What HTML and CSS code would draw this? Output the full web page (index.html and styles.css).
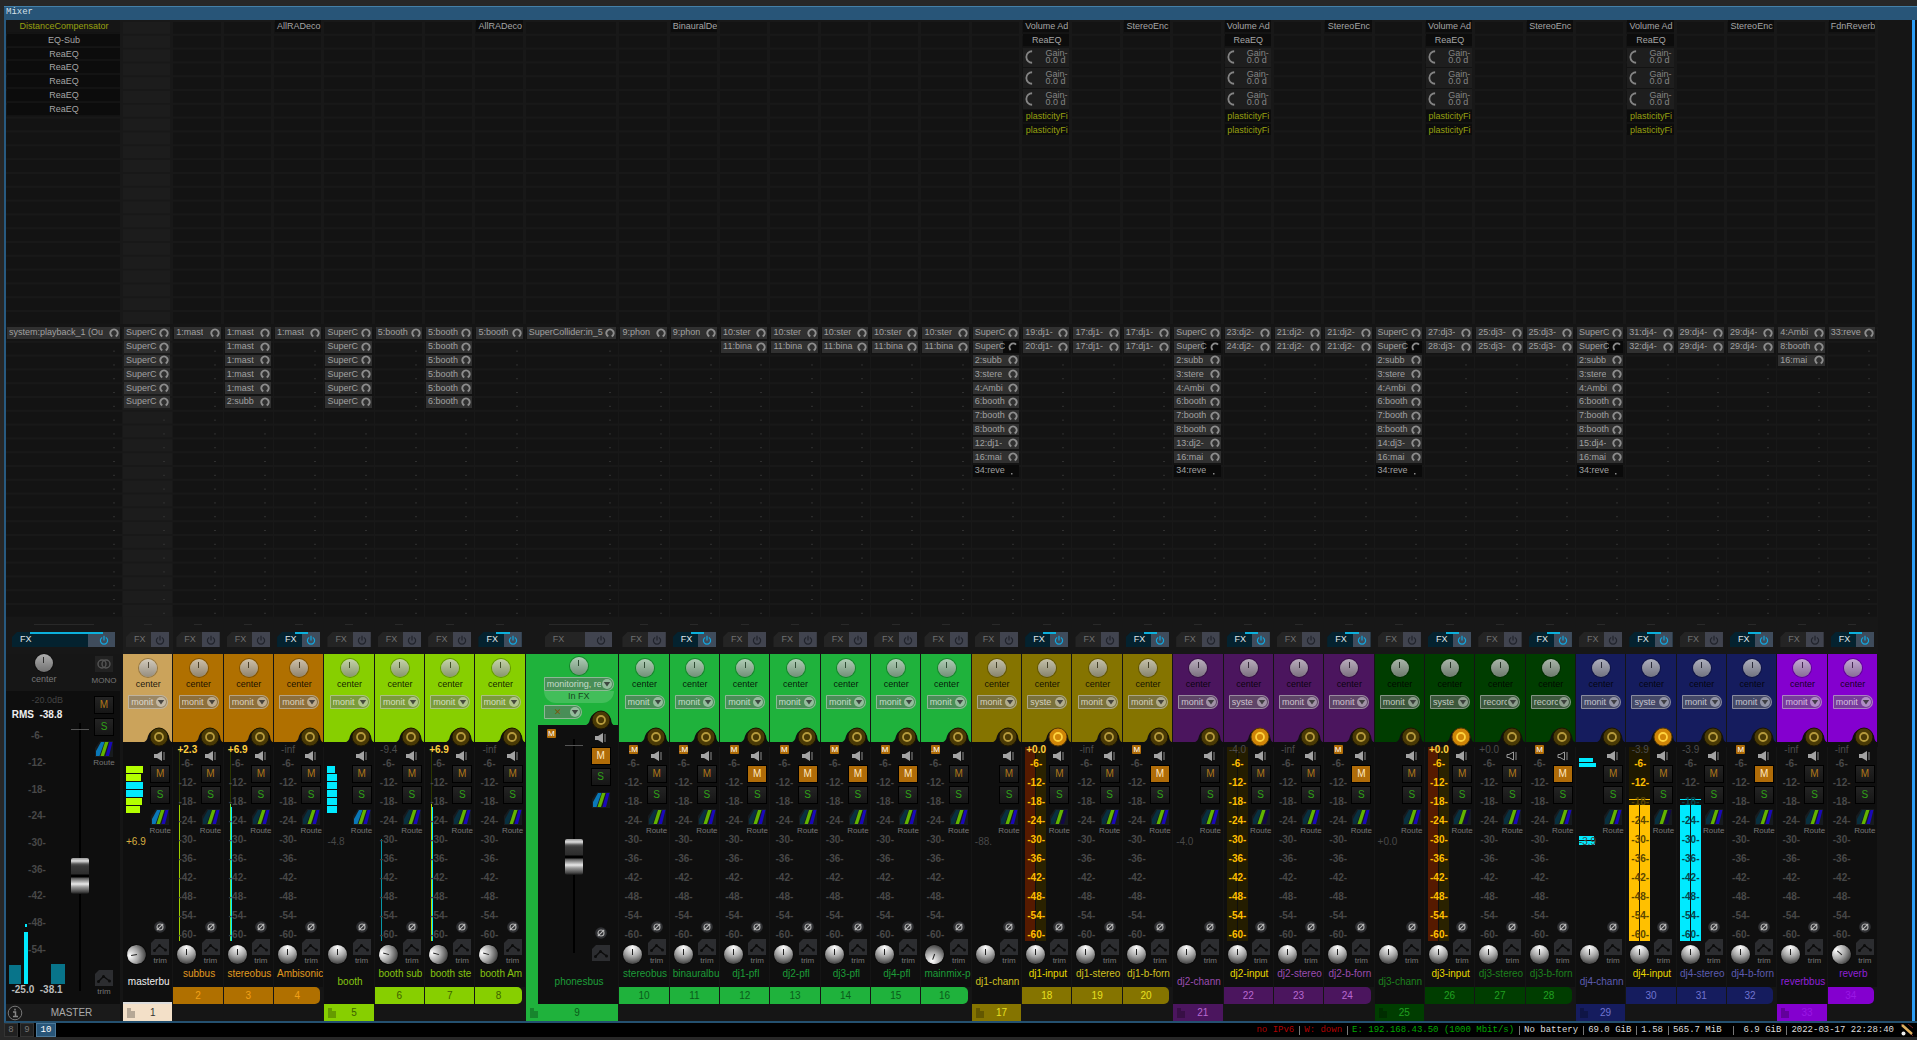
FILE: index.html
```html
<!DOCTYPE html>
<html lang="en">
<head>
<meta charset="utf-8">
<meta name="viewport" content="width=device-width, initial-scale=1">
<title>Mixer</title>
<link rel="stylesheet" href="styles.css">
</head>
<body>
<svg class="sprites" aria-hidden="true">
  <symbol id="power" viewBox="0 0 10 10"><path d="M3.2 2.4A3.6 3.6 0 1 0 6.8 2.4M5 .8V5.4" fill="none" stroke="currentColor" stroke-width="1.2"/></symbol>
  <symbol id="ring" viewBox="0 0 10 10"><path d="M3.3 8.4A3.7 3.7 0 1 1 6.7 8.4" fill="none" stroke="#8d8d8d" stroke-width="1.9"/></symbol>
  <symbol id="ring-low" viewBox="0 0 10 10"><path d="M2.600 8A3.7 3.7 0 0 1 8 2.6" fill="none" stroke="#8d8d8d" stroke-width="1.9"/></symbol>
  <symbol id="dot" viewBox="0 0 10 10"><rect x="3" y="7" width="1.5" height="1.5" fill="#888"/></symbol>
  <symbol id="gain" viewBox="0 0 10 16"><path d="M9 1.6A6.4 6.4 0 0 0 9 14.4" fill="none" stroke="#858585" stroke-width="2"/></symbol>
  <symbol id="speaker" viewBox="0 0 12 10"><path d="M0 3H3L8 0V10L3 7H0Z" fill="#a3a3a3"/><path d="M10 1V9" stroke="#777" stroke-width="1.2"/></symbol>
  <symbol id="speaker-off" viewBox="0 0 12 10"><path d="M1 3.5H3L7.5 1V9L3 6.5H1Z" fill="none" stroke="#9a9a9a"/><path d="M10 1V9" stroke="#777" stroke-width="1.2"/></symbol>
  <symbol id="route" viewBox="0 0 18 16"><path d="M5 0H18V16H0V7Z" fill="#171b1e"/><path d="M6 1H9.5L4.5 15H1V10Z" style="fill:var(--send)"/><path d="M10 1H13.500L9 15H5.500Z" fill="#62b400"/><path d="M14.500 1H17.500L14 15H10.500Z" style="fill:var(--recv)"/></symbol>
  <symbol id="phase" viewBox="0 0 12 12"><circle cx="6" cy="6" r="5.800" fill="#2f3033"/><circle cx="6" cy="6" r="3" fill="none" stroke="#aaa" stroke-width="1.200"/><path d="M2.800 9.200L9.200 2.800" stroke="#bbb" stroke-width="1.200"/></symbol>
  <symbol id="envelope" viewBox="0 0 18 16"><path d="M4 0H18V16H0V4Z" fill="#2c2d30"/><path d="M3.500 11.500L8.500 6.500L14.500 11" fill="none" stroke="#0c0c0c" stroke-width="1.400"/><circle cx="3.500" cy="11.500" r="1.500" fill="#0c0c0c"/><circle cx="8.500" cy="6.500" r="1.500" fill="#0c0c0c"/><circle cx="14.500" cy="11" r="1.500" fill="#0c0c0c"/></symbol>
  <symbol id="hill" viewBox="0 0 31 22"><path d="M0 17.500Q5 17 6 11A11 11 0 0 1 27 11Q27.500 17 31 17.500V22H0Z" fill="#0f0f0f"/></symbol>
  <symbol id="record" viewBox="0 0 20 20"><circle cx="10" cy="10" r="9" style="fill:var(--disc);stroke:var(--edge)"/><circle cx="10" cy="10" r="4" fill="none" style="stroke:var(--hole)" stroke-width="1.800"/></symbol>
  <symbol id="arrow" viewBox="0 0 12 12"><circle cx="6" cy="6" r="5" fill="#fff" fill-opacity=".42"/><path d="M2.800 4H9.200L6 8.600Z" fill="#222" fill-opacity=".75"/></symbol>
  <symbol id="folder" viewBox="0 0 8 10"><path d="M0 0H4V3H8V10H0Z" fill="#000" fill-opacity=".25"/></symbol>
  <symbol id="mono" viewBox="0 0 18 16"><circle cx="7" cy="8" r="4" fill="none" stroke="#555" stroke-width="1.400"/><circle cx="11" cy="8" r="4" fill="none" stroke="#555" stroke-width="1.400"/></symbol>
  <symbol id="info" viewBox="0 0 16 16"><circle cx="8" cy="8" r="6.800" fill="none" stroke="#777"/><path d="M6 7H8.500V11.500M6 11.500H11M8 3.800V5.400" fill="none" stroke="#888" stroke-width="1.500"/></symbol>
  <symbol id="brush" viewBox="0 0 12 12"><path d="M0 0L12 12M7 0L12 4" stroke="#702020" stroke-width="1"/><path d="M1 1L11 10" stroke="#e0b060" stroke-width="2.500"/><circle cx="2.500" cy="9.500" r="2" fill="#eee"/></symbol>
</svg>
<main class="window">
  <header class="titlebar">Mixer</header>
  <div class="mixer">
    <section class="strip master" id="master" aria-label="Master"></section>
    <div class="tracks" id="tracks"></div>
  </div>
</main>
<footer class="statusbar">
  <nav class="workspaces">
    <button>8</button><button>9</button><button class="current">10</button>
  </nav>
  <div class="status">
    <span class="bad">no IPv6</span><span class="bad">W: down</span><span class="good">E: 192.168.43.50 (1000 Mbit/s)</span><span>No battery</span><span>69.0 GiB</span><span>1.58</span><span>565.7 MiB</span><span class="wide">6.9 GiB</span><span>2022-03-17 22:28:40</span>
    <svg class="tray"><use href="#brush"/></svg>
  </div>
</footer>
<script src="mixer.js"></script>
</body>
</html>
```

FILE: styles.css
```css
* { box-sizing: border-box; }

body {
  margin: 0;
  min-height: 100vh;
  display: flex;
  flex-direction: column;
  padding: 6px 0 3px 4px;
  background: #272727;
  color: #9a9a9a;
  font: 9px/12px "Liberation Sans", Arial, sans-serif;
}

button, select, input { margin: 0; padding: 0; border: 0; font: inherit; color: inherit; background: none; }
svg { display: block; flex: none; }
.sprites { position: absolute; width: 0; height: 0; }

.window { flex: 1; display: flex; flex-direction: column; background: #151515; border-left: 2px solid #285a80; border-bottom: 2px solid #24506f; }
.titlebar { height: 14px; margin-left: -2px; padding-left: 2px; background: #285578; border-top: 1px solid #4480a8; color: #d5e0e8; font: 9px/10px "Liberation Mono", monospace; }
.mixer { flex: 1; display: flex; margin-right: 2px; padding-right: 34px; border-right: 3px solid #2e9ef4; }
.tracks { flex: 1; display: flex; min-width: 0; }

/* strips */
.strip { --send: #083040; --recv: #1a08b8; --disc: #4a3a05; --edge: #1c1602; --hole: #b59a3c; display: flex; flex-direction: column; flex: 50 1 0; min-width: 0; }
.strip.wide { flex-grow: 93; }
.strip.armed { --recv: #120848; --disc: #cf8508; --edge: #5a3c04; --hole: #ffd23c; }
.both { --send: #0a78b8; }
.master { flex: none; width: 117px; }
.strip.selected .slots, .strip.selected .fxbar { background-color: #1c1c1c; }

.slots { display: grid; min-height: 0; flex-basis: 0; overflow: hidden; border-right: 3px solid #181818; background-color: #131313; background-image: linear-gradient(#181818 2px, transparent 2px); }
.inserts { flex-grow: 22; grid-template-rows: repeat(44, minmax(0, 1fr)); background-size: 100% calc(100% / 22); }
.sends { flex-grow: 21; margin-top: 3px; grid-template-rows: repeat(21, minmax(0, 1fr)); border-right-width: 1px; padding-left: 1px; background-size: 100% calc(100% / 21); background-image: radial-gradient(circle at calc(100% - 8px) 75%, #303030 1px, transparent 1px), linear-gradient(#181818 2px, transparent 2px); }

.insert { grid-row: span 2; margin: 0 0 2px 1px; padding: 0 1px 0 2px; display: flex; justify-content: safe center; overflow: hidden; white-space: nowrap; background: #0c0c0c; color: #a5a5a5; line-height: 12px; }
.insert.offline { color: #98a010; }
.master .insert.offline { background: #151515; }
.gain { grid-row: span 3; margin: 0 0 1px 1px; display: flex; align-items: center; justify-content: space-between; background: #1e1e1e; color: #858585; padding: 0 2px 0 1px; line-height: 7px; }
.gain svg { width: 9px; height: 16px; }
.gain span { white-space: nowrap; text-align: left; }

.send-slot { margin: 0 2px 2px 0; display: flex; align-items: center; justify-content: space-between; min-width: 0; background: #303030; color: #a0a0a0; }
.send-slot span { margin-left: 1px; padding-left: 1px; overflow: hidden; white-space: nowrap; line-height: 11px; min-width: 0; }
.send-slot svg { width: 10px; height: 10px; margin-right: 1px; }
.send-slot.quiet { background: linear-gradient(90deg, #303030 30px, #090909 30px); }
.send-slot.muted { background: #0a0a0a; }

.fxbar { height: 37px; padding: 7px 4px 7px 3px; display: flex; flex-direction: column; gap: 7px; align-items: stretch; background: #171717; }
.fxbar i { height: 1px; width: 8px; align-self: center; background: #292929; }
.wide .fxbar { padding-left: 19px; padding-right: 7px; }
.master .fxbar { padding-left: 6px; padding-right: 8px; }
.master .fxbar i, .wide .fxbar i { width: 60px; }
.fx { position: relative; display: flex; height: 15px; clip-path: polygon(5px 0, 100% 0, 100% 100%, 0 100%, 0 5px); background: #242424; color: #707070; line-height: 15px; }
.fx b { flex: 1; font-weight: normal; padding-left: 8px; text-align: left; }
.fx em { width: 18px; display: flex; align-items: center; justify-content: center; background: #41444f; color: #20232b; }
.fx svg { width: 10px; height: 10px; }
.fx.on { background: #04222f; color: #e0e8ea; }
.fx.on::before { content: ""; position: absolute; top: 0; left: 18px; right: 12px; height: 2px; background: #0cb0dc; }
.fx.on em { color: #12a8e0; background: #3f4c5c; }
.wide .fx em, .master .fx em { width: 27px; padding-left: 5px; }

/* coloured panel */
.panel { position: relative; height: 88px; margin-right: 1px; padding: 5px 0 0 1px; display: flex; flex-direction: column; align-items: center; background: var(--color); }
.panel .label { color: #000d; line-height: 14px; }
.knob { appearance: none; flex: none; width: 18px; height: 18px; border-radius: 9px; background: linear-gradient(#333, #333) 50% 3px / 1px 6px no-repeat, linear-gradient(#d5d5d5, #888); opacity: .8; box-shadow: 0 0 0 1px #0005; }
.knob::-webkit-slider-thumb { appearance: none; width: 0; height: 0; }
.level.knob { width: 19px; height: 19px; border-radius: 10px; opacity: 1; background: linear-gradient(#222, #222) 50% 4px / 1px 6px no-repeat, radial-gradient(circle at 50% 15%, #fff, #aaa 45%, #444 85%); }

.picker { position: relative; width: 40px; height: 14px; margin-top: 4px; }
.picker select { appearance: none; display: block; width: 100%; height: 14px; padding: 0 12px 0 2px; background: #6f6f6f88; border: 1px solid #ffffff60; border-radius: 1px 7px 7px 1px; color: #ffffffb0; font-size: 9px; line-height: 11px; }
.picker svg { position: absolute; right: 1px; top: 1px; width: 12px; height: 12px; pointer-events: none; }
.arm { position: absolute; right: -1px; bottom: -5px; width: 31px; height: 22px; }
.arm svg { width: 31px; height: 22px; }
.arm .rec { position: absolute; left: 7px; top: 2px; width: 20px; height: 20px; }

/* meter and buttons */
.body { height: 225px; margin-right: 1px; display: grid; grid-template-columns: 25px 1fr; background: #0f0f0f; }
.left { position: relative; display: flex; flex-direction: column; padding-left: 3px; min-width: 0; }
.peak { position: relative; height: 13px; line-height: 16px; font-size: 10px; color: #4c4c4c; text-align: center; white-space: nowrap; }
.peak.hot { color: #ffd040; font-weight: bold; }
.scale { position: relative; height: 189px; display: grid; grid-template-rows: repeat(10, 1fr); align-items: center; text-align: center; font-size: 10px; font-weight: bold; color: #484848; }
.input .scale { color: #ffbf00; }
.lit .scale span:nth-child(n+3) { color: #06454b; }
.input.lit .scale span:nth-child(n+3) { color: #5a4600; }
.meter { position: absolute; left: 3px; top: 5px; width: 21px; height: 194px; }
.meter i { position: absolute; bottom: 0; }
.badge { align-self: center; margin-top: 3px; width: 9px; height: 9px; font-size: 8px; line-height: 9px; text-align: center; color: #fff; background: #b06c08; border-radius: 1px; }
.badge + .scale { margin-top: 1px; }
.left .level { margin: 1px 0 0 1px; }
.blocks { height: 86px; padding-top: 24px; display: flex; flex-direction: column; gap: 1px; }
.blocks i { height: 7px; flex: none; }
.blocks.split { padding-top: 16px; }
.blocks.split i { height: 4px; }
.blocks.split i:nth-child(3) { margin-top: 68px; }
.volume { height: 116px; padding-top: 8px; font-size: 10px; color: #484848; white-space: nowrap; width: 21px; }
.volume.hot { color: #d8b040; }

.right { display: flex; flex-direction: column; align-items: center; padding-top: 9px; }
.right svg { width: 18px; height: 16px; }
.right .spk { width: 12px; height: 10px; }
.ms { width: 18px; height: 16px; margin-top: 5px; background: linear-gradient(#242424, #161616); font-size: 10px; line-height: 16px; text-align: center; box-shadow: 0 0 0 1px #000; }
.mute { color: #b07818; }
.solo { color: #30a018; }
.mute.on { background: #b06c08; color: #ffe8c0; }
.route { margin-top: 6px; }
.cap { font-size: 8px; color: #777; line-height: 12px; }
.right .ph { width: 12px; height: 12px; margin: auto 0 6px; }

/* names and numbers */
.name { height: 20px; padding: 0 1px 0 3px; display: flex; justify-content: safe center; overflow: hidden; white-space: nowrap; font-size: 10px; line-height: 14px; color: var(--name); background: #0f0f0f; margin-right: 1px; }
.folder .name { height: 37px; padding-top: 8px; }
.number { position: relative; height: 17px; margin: 0 1px 17px 0; font-size: 10px; line-height: 17px; text-align: center; background: var(--color); color: var(--num); }
.last .number { margin-right: 4px; border-radius: 0 5px 5px 0; }
.folder .number { margin-bottom: 0; padding-left: 10px; }
.folder .number svg { position: absolute; left: 4px; top: 4px; width: 8px; height: 10px; }
.selected .number { background: #f3e0c8; box-shadow: 0 -2px #ddd; }

/* wide folder strip */
.wide .panel { height: 71px; padding: 3px 5px 0 18px; align-items: flex-start; }
.wide .panel .knob { margin-left: 26px; }
.wide .picker { width: 70px; margin-top: 2px; }
.wide .infx { width: 70px; height: 12px; line-height: 10px; text-align: center; background: #ffffff28; border-radius: 0 0 30px 30px; color: #000a; }
.wide .picker.small { width: 38px; margin-top: 2px; }
.wide .picker.small select { padding-left: 9px; color: #7a5a10; }
.wide .arm { right: 3px; }
.wide .body { height: 242px; border-left: 12px solid var(--color); grid-template-columns: 51px 1fr; }
.wide .left { padding: 4px 0 0; flex-direction: row; }
.wide .badge { align-self: flex-start; margin: 0 0 0 9px; }
.wide .fader { margin-left: 9px; margin-top: 10px; height: 214px; }
.wide .right { padding: 8px 6px 6px 0; }
.wide .name { border-left: 12px solid var(--color); }
.wide .route { margin-top: 7px; }

.fader { appearance: none; writing-mode: vertical-lr; direction: rtl; width: 18px; background: linear-gradient(#555, #555) 50% 6px / 18px 1px no-repeat, linear-gradient(#000, #000) 50% 0 / 2px 100% no-repeat; }
.fader::-webkit-slider-thumb { appearance: none; width: 18px; height: 36px; background: linear-gradient(#999 0, #ddd 3px, #555 6px, #3a3a3a 8px, #2c2c2c 16px, #000 17px, #000 19px, #555 20px, #e8e8e8 26px, #999 29px, #444 34px, #111 36px); border-radius: 2px; }

/* master */
.mhead { height: 37px; display: grid; grid-template-columns: 76px 1fr; margin-right: 3px; background: #161616; justify-items: center; align-items: start; color: #777; }
.mhead > * { display: flex; flex-direction: column; align-items: center; }
.mhead > :last-child { margin-left: 6px; }
.mhead .label { line-height: 14px; }
.mhead svg { width: 18px; height: 16px; background: #222; margin-top: 2px; }
.mhead .cap { line-height: 17px; }
.mbody { height: 313px; margin-right: 3px; display: grid; grid-template-columns: 62px 24px 1fr; background: #0e0e0e; }
.mleft { position: relative; display: flex; flex-direction: column; }
.mleft .rms0 { padding: 3px 5px 0 0; text-align: right; color: #444; }
.mleft .rms { height: 17px; line-height: 17px; text-align: center; font-size: 10px; font-weight: bold; color: #eee; white-space: nowrap; }
.mleft .scale { height: 240px; grid-template-rows: repeat(9, 1fr); }
.mleft .out { margin-top: auto; text-align: center; font-size: 10px; line-height: 12px; height: 20px; color: #bbb; white-space: nowrap; font-weight: bold; }
.mmeter { position: absolute; left: 3px; bottom: 20px; width: 56px; height: 60px; }
.mmeter i { position: absolute; bottom: 0; }
.mbody .fader { margin: 32px 0 0 3px; height: 268px; }
.mbody .right { padding: 1px 4px 6px 0; }
.mbody .ms { margin-bottom: 1px; }
.mbody .route { margin-top: 5px; }
.mbody .env { margin-top: auto; }
.mfoot { height: 17px; margin-right: 3px; display: flex; align-items: center; background: #1a1a1a; font-size: 10px; color: #aaa; }
.mfoot svg { width: 16px; height: 16px; margin-left: 1px; }
.mfoot span { flex: 1; text-align: center; }

/* status bar */
.statusbar { height: 14px; display: flex; justify-content: space-between; background: #000; font: 9px/12px "Liberation Mono", monospace; }
.workspaces { display: flex; gap: 2px; }
.workspaces button { width: 14px; background: #202020; border: 1px solid #333; color: #777; line-height: 10px; }
.workspaces .current { width: 20px; background: #285578; border-color: #4c7899; color: #fff; }
.status { display: flex; align-items: center; padding-right: 4px; color: #ddd; }
.status span { padding: 0 5px 0 4px; border-left: 1px solid #777; line-height: 9px; white-space: pre; }
.status span.bad:first-child { border: 0; }
.status .wide { margin-left: 6px; padding-left: 10px; }
.status .bad { color: #b00000; }
.status .good { color: #00a800; }
.tray { width: 12px; height: 12px; margin-left: 2px; }
```

FILE: mixer.js
```js
const use = (id, cls = '') => `<svg class="${cls}" aria-hidden="true"><use href="#${id}"/></svg>`;

const groups = {
  tan: ['#cba35b', '#eeeeee', '#333333'],
  orange: ['#b07000', '#e09a20', '#f0a018'],
  lime: ['#87cf00', '#86c410', '#3c6000'],
  green: ['#1fb23c', '#1d9c38', '#0a5a1a'],
  olive: ['#857400', '#cfc020', '#e8e020'],
  plum: ['#4b155e', '#9a4cb0', '#b868d0'],
  forest: ['#003d00', '#1d801d', '#20a020'],
  navy: ['#151c5e', '#5c5cb0', '#7074d0'],
  violet: ['#8400cf', '#9020d8', '#9a18e4'],
};

const super6 = Array(6).fill('SuperC');
const volumeChain = ['Volume Ad', 'ReaEQ', 'gain', 'gain', 'gain', '~plasticityFi', '~plasticityFi'];
const channelSends = (pfl) => ['SuperC', '<SuperC', '2:subb', '3:stere', '4:Ambi', '6:booth', '7:booth', '8:booth', pfl, '16:mai', '-34:reve'];
const cyan = '#00eaff', lime = '#b4ff00', gold = '#ffc000';

// meter bars: [left, width, height, colour, optional bottom]
const dim = [[0, 10, 194, '#241d00'], [11, 10, 194, '#241d00']];
const clipped = [[0, 10, 194, '#561a00'], [11, 10, 194, '#2a2200']];
const full = (c) => [[0, 10, 136, c], [11, 10, 136, c], [0, 21, 1, c, 141]];

const tracks = [
  { g: 'tan', folder: 1, selected: 1, name: 'masterbu', vol: '+6.9', hot: 1, sends: super6, both: 1, turn: -100,
    blocks: [[17, lime], [15, lime], [17, cyan], [17, cyan], [16, lime], [14, lime]] },
  { g: 'orange', name: 'subbus', peak: '+2.3', hot: 1, sends: ['1:mast'], bars: [[3, 1, 190, '#2c3800'], [3, 1, 136, '#9fd000']] },
  { g: 'orange', name: 'stereobus', peak: '+6.9', hot: 1, sends: ['1:mast', '1:mast', '1:mast', '1:mast', '1:mast', '2:subb'], bars: [[3, 1, 190, '#2c3800'], [3, 1, 137, '#70e040'], [4, 1, 134, cyan]] },
  { g: 'orange', name: 'Ambisonic', peak: '-inf', fx: ['AllRADeco'], sends: ['1:mast'], last: 1 },
  { g: 'lime', folder: 1, name: 'booth', vol: '-4.8', both: 1, sends: super6, blocks: [[8, cyan], [10, cyan], [10, cyan], [10, cyan], [10, cyan], [10, cyan]] },
  { g: 'lime', name: 'booth sub', peak: '-9.4', sends: ['5:booth'], bars: [[3, 1, 102, '#0898a8']], turn: -75 },
  { g: 'lime', name: 'booth ste', peak: '+6.9', hot: 1, sends: ['5:booth', '5:booth', '5:booth', '5:booth', '5:booth', '6:booth'], bars: [[3, 1, 190, '#2c3800'], [3, 1, 137, '#b4e000'], [4, 1, 134, cyan]], turn: -75 },
  { g: 'lime', name: 'booth Am', peak: '-inf', fx: ['AllRADeco'], sends: ['5:booth'], last: 1, turn: -75 },
  { g: 'green', folder: 1, wide: 1, name: 'phonesbus', muted: 1, both: 1, sends: ['SuperCollider:in_5'] },
  { g: 'green', name: 'stereobus', badge: '.M', sends: ['9:phon'] },
  { g: 'green', name: 'binauralbu', badge: '.M', fx: ['BinauralDe'], sends: ['9:phon'] },
  ...[1, 2, 3, 4].map((n) => ({ g: 'green', name: `dj${n}-pfl`, badge: 'M', muted: 1, sends: ['10:ster', '11:bina'] })),
  { g: 'green', name: 'mainmix-p', badge: '.M', sends: ['10:ster', '11:bina'], last: 1, turn: 200 },
];

const djs = [
  { g: 'olive', vol: '-88.', peak: '+0.0', bars: clipped, stereoPeak: '-inf' },
  { g: 'plum', vol: '-4.0', peak: '-4.0', bars: dim, stereoPeak: '-inf' },
  { g: 'forest', vol: '+0.0', peak: '+0.0', bars: clipped, stereoPeak: '+0.0', rec: 1 },
  { g: 'navy', vol: '-3.9', peak: '-3.9', bars: [[0, 21, 194, '#1e1800'], ...full(gold)], stereoPeak: '-3.9', stereoBars: full(cyan) },
];
djs.forEach((d, i) => {
  const n = i + 1, base = 17 + i * 4;
  const source = d.rec ? 'recorc' : 'monit';
  tracks.push(
    { g: d.g, folder: 1, name: `dj${n}-chann`, vol: d.vol, sends: channelSends(`${12 + i}:dj${n}-`), split: i === 3,
      blocks: i === 3 ? [[14, cyan], [17, cyan], [15, cyan], [16, cyan]] : [] },
    { g: d.g, name: `dj${n}-input`, input: 1, peak: d.peak, hot: d.peak === '+0.0', bars: d.bars, lit: i === 3, fx: volumeChain, source: 'syste', sends: [`${base + 2}:dj${n}-`, `${base + 3}:dj${n}-`] },
    { g: d.g, name: `dj${n}-stereo`, peak: d.stereoPeak, bars: d.stereoBars, lit: i === 3, source, off: d.rec, sends: [`${base}:dj${n}-`, `${base}:dj${n}-`] },
    { g: d.g, name: `dj${n}-b-forn`, badge: 'M', muted: 1, fx: ['StereoEnc'], source, off: d.rec, sends: [`${base}:dj${n}-`, `${base}:dj${n}-`], last: 1 });
});
tracks.push(
  { g: 'violet', folder: 1, scale: 1, name: 'reverbbus', peak: '-inf', sends: ['4:Ambi', '8:booth', '16:mai'] },
  { g: 'violet', name: 'reverb', peak: '-inf', fx: ['FdnReverb'], sends: ['33:reve'], last: 1, turn: -50 });

const insert = (t) => t === 'gain'
  ? `<button class="gain">${use('gain')}<span>Gain-<br>0.0 d</span></button>`
  : `<button class="insert ${t[0] === '~' ? 'offline' : ''}">${t.replace('~', '')}</button>`;
const send = (t) => {
  const [cls, icon] = t[0] === '<' ? ['quiet', 'ring-low'] : t[0] === '-' ? ['muted', 'dot'] : ['', 'ring'];
  return `<button class="send-slot ${cls}"><span>${t.replace(/^[<-]/, '')}</span>${use(icon)}</button>`;
};
const racks = (fx, sends) => `
  <div class="slots inserts">${fx.map(insert).join('')}</div>
  <div class="slots sends">${sends.map(send).join('')}</div>
  <div class="fxbar"><i></i><button class="fx ${fx.length ? 'on' : ''}"><b>FX</b><em>${use('power')}</em></button></div>`;
const scale = (last) => {
  let s = '';
  for (let db = 6; db <= last; db += 6) s += `<span>-${db}-</span>`;
  return `<div class="scale">${s}</div>`;
};
const bars = (list = []) => list.map(([x, w, h, c, b = 0]) =>
  `<i style="left:${x}px;width:${w}px;height:${h}px;bottom:${b}px;background:${c}"></i>`).join('');
const knob = (label, turn = 0, cls = '') =>
  `<input type="range" class="knob ${cls}" aria-label="${label}"${turn ? ` style="rotate:${turn}deg"` : ''}>`;
const picker = (label, text, cls = '') =>
  `<div class="picker ${cls}"><select aria-label="${label}"><option>${text}</option></select>${use('arrow')}</div>`;
const rightSide = (t) => `
  <div class="right ${t.both ? 'both' : ''}">
    ${use(t.off ? 'speaker-off' : 'speaker', 'spk')}
    <button class="ms mute ${t.muted ? 'on' : ''}">M</button>
    <button class="ms solo">S</button>
    ${use('route', 'route')}${t.wide ? '' : '<span class="cap">Route</span>'}
    ${use('phase', 'ph')}${use('envelope')}${t.wide ? '' : '<span class="cap">trim</span>'}
  </div>`;

function leftSide(t) {
  if (t.wide) return `<div class="left"><span class="badge">M</span><input type="range" class="fader" aria-label="${t.name} volume" value="44"></div>`;
  const level = knob(t.name + ' volume', t.turn, 'level');
  if (t.folder && !t.scale) {
    const blocks = (t.blocks || []).map(([w, c]) => `<i style="width:${w}px;background:${c}"></i>`).join('');
    return `<div class="left"><div class="blocks ${t.split ? 'split' : ''}">${blocks}</div><div class="volume ${t.hot ? 'hot' : ''}">${t.vol}</div>${level}</div>`;
  }
  const top = t.badge ? `<span class="badge">${t.badge}</span>` : `<div class="peak ${t.hot ? 'hot' : ''}">${t.peak}</div>`;
  return `<div class="left"><div class="meter">${bars(t.bars)}</div>${top}${scale(60)}${level}</div>`;
}

function strip(t, i) {
  const [color, name, num] = groups[t.g];
  const cls = ['folder', 'wide', 'selected', 'last', 'input', 'lit'].filter((k) => t[k]).join(' ') + (t.input ? ' armed' : '');
  const arm = `<button class="arm" aria-label="Record arm">${use('hill')}${use('record', 'rec')}</button>`;
  const panel = t.wide
    ? `${knob('Pan')}${picker('Input', 'monitoring, re')}<span class="infx">In FX</span>${picker('Mode', '✕', 'small')}`
    : `${knob('Pan')}<span class="label">center</span>${picker('Input', t.source || 'monit')}`;
  return `<section class="strip ${cls}" style="--color:${color};--name:${t.input ? '#e8d800' : name};--num:${num}">
    ${racks(t.fx || [], t.sends)}
    <div class="panel">${panel}${arm}</div>
    <div class="body">${leftSide(t)}${rightSide(t)}</div>
    <div class="name">${t.name}</div>
    <div class="number">${t.folder ? use('folder') : ''}${i + 1}</div>
  </section>`;
}

document.getElementById('tracks').innerHTML = tracks.map(strip).join('');
document.getElementById('master').innerHTML = `
  ${racks(['~DistanceCompensator', 'EQ-Sub', 'ReaEQ', 'ReaEQ', 'ReaEQ', 'ReaEQ', 'ReaEQ'], ['system:playback_1 (Ou'])}
  <div class="mhead"><div>${knob('Master pan')}<span class="label">center</span></div><div>${use('mono')}<span class="cap">MONO</span></div></div>
  <div class="mbody">
    <div class="mleft"><div class="mmeter">${bars([[0, 12, 19, '#08748a'], [15, 4, 52, cyan], [16, 2, 3, cyan, 57], [42, 14, 20, '#08748a']])}</div>
      <span class="rms0">-20.0dB</span><span class="rms">RMS&nbsp; -38.8</span>${scale(54)}<span class="out">-25.0&nbsp; -38.1</span></div>
    <input type="range" class="fader" aria-label="Master volume" value="42">
    <div class="right both"><button class="ms mute">M</button><button class="ms solo">S</button>${use('route', 'route')}<span class="cap">Route</span>${use('envelope', 'env')}<span class="cap">trim</span></div>
  </div>
  <div class="mfoot">${use('info')}<span>MASTER</span></div>`;
```
